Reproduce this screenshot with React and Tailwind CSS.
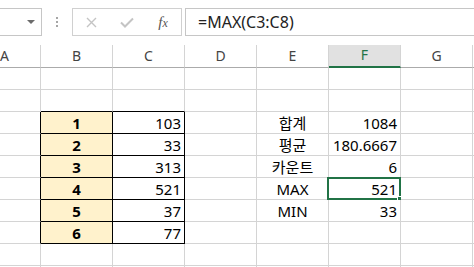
import React from 'react';

const COLS = ['A', 'B', 'C', 'D', 'E', 'F', 'G', ''];

// cell contents keyed by "row-col"
const CELLS = {
    '3-1': '1', '4-1': '2', '5-1': '3', '6-1': '4', '7-1': '5', '8-1': '6',
    '3-2': '103', '4-2': '33', '5-2': '313', '6-2': '521', '7-2': '37', '8-2': '77',
    '3-4': '합계', '4-4': '평균', '5-4': '카운트', '6-4': 'MAX', '7-4': 'MIN',
    '3-5': '1084', '4-5': '180.6667', '5-5': '6', '6-5': '521', '7-5': '33',
};

function Cell({ r, c }) {
    const value = CELLS[`${r}-${c}`];
    const inTable = r >= 3 && r <= 8;
    const rightBlack = inTable && c <= 2;
    const bottomBlack = r >= 2 && r <= 8 && (c === 1 || c === 2);
    const isLabel = c === 1 && inTable;
    const selected = r === 6 && c === 5;

    let align = 'justify-end';
    if (c === 1 || c === 4) align = 'justify-center';

    return (
        <div
            className={[
                'relative h-[22px] border-r border-b flex items-center px-[3px] text-[15px] text-black leading-none',
                rightBlack ? 'border-r-black' : 'border-r-[#d4d4d4]',
                bottomBlack ? 'border-b-black' : 'border-b-[#d4d4d4]',
                isLabel ? 'bg-[#fff2cc] font-bold' : 'bg-white',
                align,
            ].join(' ')}
        >
            {value && <span className="pt-[1px]">{value}</span>}
            {selected && (
                <>
                    <div className="absolute left-[-2px] top-[-1px] w-[74px] h-[23px] border-2 border-[#217346]" />
                    <div className="absolute left-[68px] top-[18px] w-[6px] h-[6px] bg-[#217346] border border-white" />
                </>
            )}
        </div>
    );
}

export default function App() {
    const rows = [1, 2, 3, 4, 5, 6, 7, 8, 9, 10];

    return (
        <div className="w-[474px] h-[267px] overflow-hidden bg-white font-['Noto_Sans','Noto_Sans_CJK_KR',sans-serif]">
            {/* formula bar */}
            <div className="h-[45px] flex items-start pt-[8px]">
                <div className="ml-[-40px] w-[82px] h-[28px] border border-[#c6c6c6] flex items-center justify-end pr-[6px]">
                    <svg width="8" height="4" viewBox="0 0 8 4">
                        <path d="M0 0 L8 0 L4 4 Z" fill="#6b6b6b" />
                    </svg>
                </div>
                <div className="ml-[14px] h-[28px] flex flex-col justify-center gap-[2px]">
                    <div className="w-[2px] h-[2px] bg-[#a6a6a6]" />
                    <div className="w-[2px] h-[2px] bg-[#a6a6a6]" />
                    <div className="w-[2px] h-[2px] bg-[#a6a6a6]" />
                </div>
                <div className="ml-[14px] w-[110px] h-[28px] border border-[#d0d0d0] grid grid-cols-[36px_36px_36px] items-center">
                    <div className="flex justify-center">
                        <svg width="11" height="11" viewBox="0 0 11 11">
                            <path d="M1 1 L10 10 M10 1 L1 10" stroke="#c4c4c4" strokeWidth="1.4" />
                        </svg>
                    </div>
                    <div className="flex justify-center">
                        <svg width="14" height="11" viewBox="0 0 14 11">
                            <path d="M1 5.5 L5 9.5 L13 1.5" stroke="#c4c4c4" strokeWidth="2" fill="none" />
                        </svg>
                    </div>
                    <div className="flex justify-center items-baseline font-['Liberation_Serif',serif] italic text-[#555] text-[15px] leading-none">
                        <span>f</span>
                        <span className="text-[12px]">x</span>
                    </div>
                </div>
                <div className="ml-[3px] flex-1 mr-[-10px] h-[28px] border border-[#c6c6c6] flex items-center pl-[12px] text-[16px] text-[#222]">
                    =MAX(C3:C8)
                </div>
            </div>

            {/* sheet */}
            <div className="ml-[-31px] grid grid-cols-[repeat(8,72px)]">
                {COLS.map((col, c) => (
                    <div
                        key={c}
                        className={
                            c === 5
                                ? 'h-[23px] border-r border-r-[#d4d4d4] border-b-2 border-b-[#217346] bg-[#e1e1e1] flex items-center justify-center text-[14px] text-[#217346] pb-[2px]'
                                : 'h-[23px] border-r border-r-[#d4d4d4] border-b border-b-[#ababab] bg-white flex items-center justify-center text-[14px] text-[#444] pb-[1px]'
                        }
                    >
                        {col}
                    </div>
                ))}
                {rows.map((r) => COLS.map((col, c) => <Cell key={`${r}-${c}`} r={r} c={c} />))}
            </div>
        </div>
    );
}
